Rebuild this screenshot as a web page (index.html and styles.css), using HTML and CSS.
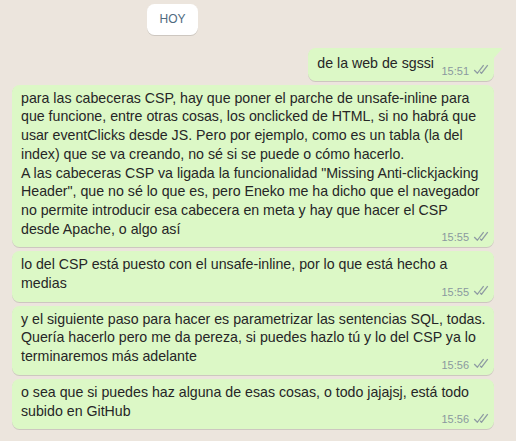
FILE: index.html
```html
<!DOCTYPE html>
<html lang="es">
<head>
<meta charset="utf-8">
<link rel="stylesheet" href="styles.css">
</head>
<body>
<div class="chat">
  <div class="date-row"><span class="date">HOY</span></div>

  <div class="msg first">
    <span class="text">de la web de sgssi</span><span class="pad"></span>
    <span class="meta"><span class="time">15:51</span><svg class="tick" viewBox="0 2 16 11" width="16" height="11"><path fill="currentColor" d="M15.01 3.316l-.478-.372a.365.365 0 0 0-.51.063L8.666 9.879a.32.32 0 0 1-.484.033l-.358-.325a.319.319 0 0 0-.484.032l-.378.483a.418.418 0 0 0 .036.541l1.32 1.266c.143.14.361.125.484-.033l6.272-8.048a.366.366 0 0 0-.064-.512zm-4.1 0l-.478-.372a.365.365 0 0 0-.51.063L4.566 9.879a.32.32 0 0 1-.484.033L1.891 7.769a.366.366 0 0 0-.515.006l-.423.433a.364.364 0 0 0 .006.514l3.258 3.185c.143.14.361.125.484-.033l6.272-8.048a.365.365 0 0 0-.063-.51z"/></svg></span>
  </div>

  <div class="msg wide">
    <span class="text">para las cabeceras CSP, hay que poner el parche de unsafe-inline para<br>que funcione, entre otras cosas, los onclicked de HTML, si no habrá que<br>usar eventClicks desde JS. Pero por ejemplo, como es un tabla (la del<br>index) que se va creando, no sé si se puede o cómo hacerlo.<br>A las cabeceras CSP va ligada la funcionalidad "Missing Anti-clickjacking<br>Header", que no sé lo que es, pero Eneko me ha dicho que el navegador<br>no permite introducir esa cabecera en meta y hay que hacer el CSP<br>desde Apache, o algo así</span><span class="pad"></span>
    <span class="meta"><span class="time">15:55</span><svg class="tick" viewBox="0 2 16 11" width="16" height="11"><path fill="currentColor" d="M15.01 3.316l-.478-.372a.365.365 0 0 0-.51.063L8.666 9.879a.32.32 0 0 1-.484.033l-.358-.325a.319.319 0 0 0-.484.032l-.378.483a.418.418 0 0 0 .036.541l1.32 1.266c.143.14.361.125.484-.033l6.272-8.048a.366.366 0 0 0-.064-.512zm-4.1 0l-.478-.372a.365.365 0 0 0-.51.063L4.566 9.879a.32.32 0 0 1-.484.033L1.891 7.769a.366.366 0 0 0-.515.006l-.423.433a.364.364 0 0 0 .006.514l3.258 3.185c.143.14.361.125.484-.033l6.272-8.048a.365.365 0 0 0-.063-.51z"/></svg></span>
  </div>

  <div class="msg wide">
    <span class="text">lo del CSP está puesto con el unsafe-inline, por lo que está hecho a<br>medias</span><span class="pad"></span>
    <span class="meta"><span class="time">15:55</span><svg class="tick" viewBox="0 2 16 11" width="16" height="11"><path fill="currentColor" d="M15.01 3.316l-.478-.372a.365.365 0 0 0-.51.063L8.666 9.879a.32.32 0 0 1-.484.033l-.358-.325a.319.319 0 0 0-.484.032l-.378.483a.418.418 0 0 0 .036.541l1.32 1.266c.143.14.361.125.484-.033l6.272-8.048a.366.366 0 0 0-.064-.512zm-4.1 0l-.478-.372a.365.365 0 0 0-.51.063L4.566 9.879a.32.32 0 0 1-.484.033L1.891 7.769a.366.366 0 0 0-.515.006l-.423.433a.364.364 0 0 0 .006.514l3.258 3.185c.143.14.361.125.484-.033l6.272-8.048a.365.365 0 0 0-.063-.51z"/></svg></span>
  </div>

  <div class="msg wide">
    <span class="text">y el siguiente paso para hacer es parametrizar las sentencias SQL, todas.<br>Quería hacerlo pero me da pereza, si puedes hazlo tú y lo del CSP ya lo<br>terminaremos más adelante</span><span class="pad"></span>
    <span class="meta"><span class="time">15:56</span><svg class="tick" viewBox="0 2 16 11" width="16" height="11"><path fill="currentColor" d="M15.01 3.316l-.478-.372a.365.365 0 0 0-.51.063L8.666 9.879a.32.32 0 0 1-.484.033l-.358-.325a.319.319 0 0 0-.484.032l-.378.483a.418.418 0 0 0 .036.541l1.32 1.266c.143.14.361.125.484-.033l6.272-8.048a.366.366 0 0 0-.064-.512zm-4.1 0l-.478-.372a.365.365 0 0 0-.51.063L4.566 9.879a.32.32 0 0 1-.484.033L1.891 7.769a.366.366 0 0 0-.515.006l-.423.433a.364.364 0 0 0 .006.514l3.258 3.185c.143.14.361.125.484-.033l6.272-8.048a.365.365 0 0 0-.063-.51z"/></svg></span>
  </div>

  <div class="msg wide">
    <span class="text">o sea que si puedes haz alguna de esas cosas, o todo jajajsj, está todo<br>subido en GitHub</span><span class="pad"></span>
    <span class="meta"><span class="time">15:56</span><svg class="tick" viewBox="0 2 16 11" width="16" height="11"><path fill="currentColor" d="M15.01 3.316l-.478-.372a.365.365 0 0 0-.51.063L8.666 9.879a.32.32 0 0 1-.484.033l-.358-.325a.319.319 0 0 0-.484.032l-.378.483a.418.418 0 0 0 .036.541l1.32 1.266c.143.14.361.125.484-.033l6.272-8.048a.366.366 0 0 0-.064-.512zm-4.1 0l-.478-.372a.365.365 0 0 0-.51.063L4.566 9.879a.32.32 0 0 1-.484.033L1.891 7.769a.366.366 0 0 0-.515.006l-.423.433a.364.364 0 0 0 .006.514l3.258 3.185c.143.14.361.125.484-.033l6.272-8.048a.365.365 0 0 0-.063-.51z"/></svg></span>
  </div>
</div>
</body>
</html>
```

FILE: styles.css
```css
html, body {
  margin: 0;
  padding: 0;
}

body {
  background: #ece5dd;
  font-family: "Liberation Sans", Arial, sans-serif;
  color: #262626;
  width: 516px;
  height: 441px;
  overflow: hidden;
}

.chat {
  display: flex;
  flex-direction: column;
  align-items: flex-end;
  padding: 4px 22px 0 12px;
}

.date-row {
  align-self: stretch;
  display: flex;
  padding-left: 135px;
  margin-bottom: 13px;
}

.date {
  background: #ffffff;
  border-radius: 7.5px;
  box-shadow: 0 1px 0.5px rgba(0, 0, 0, 0.13);
  color: #4f6a80;
  font-size: 12px;
  line-height: 18px;
  padding: 6px 12.5px 7px;
}

.msg {
  position: relative;
  background: #dcf8c6;
  border-radius: 7.5px;
  box-shadow: 0 1px 0.5px rgba(0, 0, 0, 0.13);
  font-size: 14.2px;
  line-height: 18.7px;
  padding: 4px 6px 9px 9px;
  margin-top: 4px;
  box-sizing: border-box;
  max-width: 482px;
}

.msg.first {
  margin-top: 0;
  padding-top: 6px;
  padding-bottom: 8px;
  border-top-right-radius: 0;
}

.msg.first::after {
  content: "";
  position: absolute;
  top: 0;
  right: -8px;
  width: 8px;
  height: 10px;
  background: #dcf8c6;
  clip-path: polygon(0 0, 90% 0, 100% 8%, 0 100%);
}

.msg.wide {
  align-self: stretch;
}

.pad {
  display: inline-block;
  width: 54px;
  height: 1px;
}

.meta {
  position: absolute;
  right: 5px;
  bottom: 2px;
  display: flex;
  align-items: flex-end;
  gap: 4px;
  color: #8a989f;
}

.time {
  font-size: 11px;
  line-height: 15px;
}

.tick {
  display: block;
  margin-bottom: 3.5px;
  color: #8f9ca3;
}
```
